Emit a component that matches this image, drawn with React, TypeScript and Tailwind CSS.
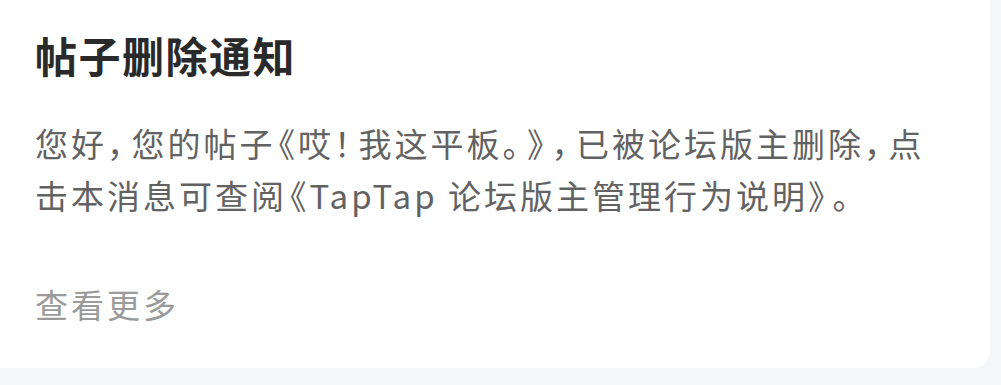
import React from 'react';

// closing punctuation: half width + a bit of air, opening: tight
const close = "[font-feature-settings:'halt'] tracking-[8px]";
const open = "[font-feature-settings:'halt'] tracking-[3px] ml-[3px]";

export default function App() {
  return (
    <div className="min-h-screen bg-[#f5f6f8] font-['Noto_Sans_CJK_SC','Noto_Sans',sans-serif]">
      {/* Notice card */}
      <div className="w-[990px] bg-white rounded-br-2xl px-[35px] pt-[29px] pb-[38px]">
        <h3 className="text-[42px] leading-[52px] font-bold text-[#2a2a2a] tracking-[1.5px]">帖子删除通知</h3>
        <p className="mt-[36px] text-[33px] leading-[52px] text-[#626262] tracking-[3px]">
          您好<span className={close}>，</span>您的帖子<span className={open}>《</span>哎<span className={close}>！</span>我这平板<span className={close}>。》，</span>已被论坛版主删除<span className={close}>，</span>点
          <br />
          击本消息可查阅<span className={open}>《</span>TapTap 论坛版主管理行为说明<span className={close}>》</span><span className="[font-feature-settings:'halt']">。</span>
        </p>
        <button className="mt-[57px] text-[33px] leading-[52px] text-[#9a9a9a] tracking-[3px]">查看更多</button>
      </div>
    </div>
  );
}
